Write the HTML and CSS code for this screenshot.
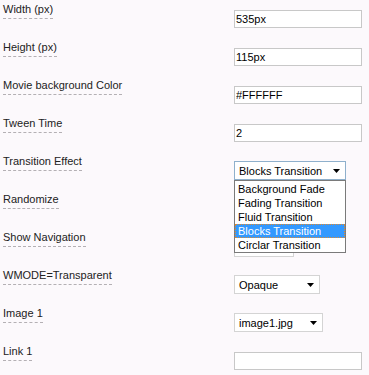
FILE: index.html
```html
<!DOCTYPE html>
<html lang="en">
<head>
  <meta charset="UTF-8">
  <title>Slideshow settings</title>
  <link rel="stylesheet" href="styles.css">
</head>
<body>
<div class="settings">

  <div class="row">
    <div class="label"><span>Width (px)</span></div>
    <div class="control"><input type="text" class="field" value="535px"></div>
  </div>

  <div class="row">
    <div class="label"><span>Height (px)</span></div>
    <div class="control"><input type="text" class="field" value="115px"></div>
  </div>

  <div class="row">
    <div class="label"><span>Movie background Color</span></div>
    <div class="control"><input type="text" class="field" value="#FFFFFF"></div>
  </div>

  <div class="row">
    <div class="label"><span>Tween Time</span></div>
    <div class="control"><input type="text" class="field" value="2"></div>
  </div>

  <div class="row">
    <div class="label"><span>Transition Effect</span></div>
    <div class="control">
      <div class="select select-effect">
        <span class="select-text">Blocks Transition</span>
        <svg class="arrow" width="7" height="4" viewBox="0 0 7 4"><path d="M0 0h7L3.5 4z" fill="#000"/></svg>
      </div>
      <ul class="dropdown">
        <li>Background Fade</li>
        <li>Fading Transition</li>
        <li>Fluid Transition</li>
        <li class="active">Blocks Transition</li>
        <li>Circlar Transition</li>
      </ul>
    </div>
  </div>

  <!-- these two sit under the open list -->
  <div class="row">
    <div class="label"><span>Randomize</span></div>
    <div class="control">
      <div class="select select-small"></div>
    </div>
  </div>

  <div class="row">
    <div class="label"><span>Show Navigation</span></div>
    <div class="control">
      <div class="select select-small"></div>
    </div>
  </div>

  <div class="row">
    <div class="label"><span>WMODE=Transparent</span></div>
    <div class="control">
      <div class="select select-wmode">
        <span class="select-text">Opaque</span>
        <svg class="arrow" width="7" height="4" viewBox="0 0 7 4"><path d="M0 0h7L3.5 4z" fill="#000"/></svg>
      </div>
    </div>
  </div>

  <div class="row">
    <div class="label"><span>Image 1</span></div>
    <div class="control">
      <div class="select select-image">
        <span class="select-text">image1.jpg</span>
        <svg class="arrow" width="7" height="4" viewBox="0 0 7 4"><path d="M0 0h7L3.5 4z" fill="#000"/></svg>
      </div>
    </div>
  </div>

  <div class="row">
    <div class="label"><span>Link 1</span></div>
    <div class="control"><input type="text" class="field" value=""></div>
  </div>

</div>
</body>
</html>
```

FILE: styles.css
```css
body {
  margin: 0;
  background: #fcf9fc;
  font-family: 'Liberation Sans', Arial, sans-serif;
  font-size: 11px;
  color: #222;
}

.row {
  display: flex;
  align-items: flex-start;
  height: 38px;
}

.label {
  width: 231px;
  padding-left: 3px;
  padding-top: 3px;
}

.label span {
  display: inline-block;
  line-height: 13px;
  padding-bottom: 2px;
  border-bottom: 1px dashed #b4b0b4;
}

.control {
  position: relative;
  margin-top: 10px;
}

.field {
  box-sizing: border-box;
  width: 128px;
  height: 18px;
  margin: 0;
  padding: 0 1px;
  border: 1px solid #c8c8c8;
  background: #fff;
  font-family: 'Liberation Sans', Arial, sans-serif;
  font-size: 11px;
  color: #000;
  outline: none;
}

.select {
  box-sizing: border-box;
  display: flex;
  align-items: center;
  justify-content: space-between;
  height: 19px;
  padding: 0 5px 0 4px;
  border: 1px solid #d4d4d4;
  background: #fff;
  color: #000;
  font-size: 11px;
}

.select-effect {
  width: 112px;
  margin-top: -1px;
  border-color: #8fb0cc;
}

.select-small {
  width: 60px;
}

.select-wmode {
  width: 86px;
  margin-top: -1px;
}

.select-image {
  width: 89px;
  margin-top: -1px;
}

.dropdown {
  position: absolute;
  top: 18px;
  left: 0;
  z-index: 2;
  box-sizing: border-box;
  width: 112px;
  height: 73px;
  margin: 0;
  padding: 1px 0;
  list-style: none;
  border: 1px solid #7a7a7a;
  background: #fff;
  color: #000;
}

.dropdown li {
  box-sizing: border-box;
  height: 14px;
  line-height: 12px;
  padding-left: 2px;
  border: 1px solid transparent;
  white-space: nowrap;
}

.dropdown .active {
  background: #3399ff;
  color: #fff;
  border: 1px dotted #e08a30;
}
```
